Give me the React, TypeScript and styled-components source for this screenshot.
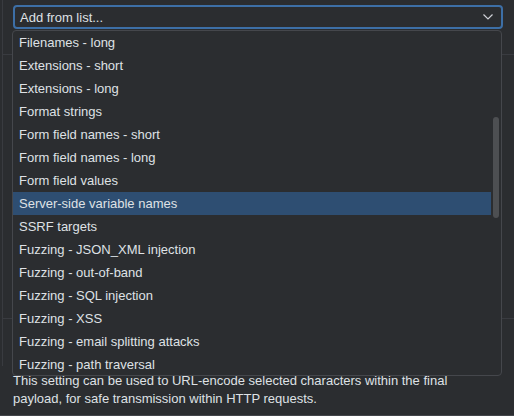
import React from 'react';
import styled, { createGlobalStyle } from 'styled-components';

const GlobalStyle = createGlobalStyle`
	html, body {
		margin: 0;
		padding: 0;
		background: #2b2d30;
	}
	body {
		font-family: 'Liberation Sans', Arial, sans-serif;
		font-size: 13px;
		color: #dfe1e5;
	}
`;

const Page = styled.div`
	position: relative;
	width: 514px;
	height: 416px;
	overflow: hidden;
	background: #2b2d30;
	border-bottom: 1px solid #43454a;
	box-sizing: border-box;
`;

const Frame = styled.div`
	margin-left: 2px;
	height: 366px;
	border-left: 1px solid #393b40;
	display: flex;
	flex-direction: column;
`;

const Section = styled.div<{ $h: number }>`
	height: ${p => p.$h}px;
	flex: 0 0 auto;
	border-bottom: 1px solid #393b40;
	box-sizing: border-box;
	padding-top: 5px;
	padding-left: 10px;
`;

const Combo = styled.div`
	width: 490px;
	height: 24px;
	box-sizing: border-box;
	border: 2px solid #3d6fa6;
	border-radius: 4px;
	display: flex;
	align-items: center;
	justify-content: space-between;
	padding: 0 8px 0 5px;
	color: #dfe1e5;
`;

const Chevron = styled.svg`
	width: 10px;
	height: 6px;
`;

const Description = styled.p`
	margin: 6px 0 0 13px;
	line-height: 18px;
	width: 470px;
`;

const Popup = styled.div`
	position: absolute;
	top: 30px;
	left: 12px;
	width: 490px;
	height: 346px;
	box-sizing: border-box;
	background: #2b2d30;
	border: 1px solid #45474c;
	border-radius: 4px;
	overflow: hidden;
`;

const List = styled.ul`
	list-style: none;
	margin: 0;
	padding: 0 10px 0 0;
`;

const Item = styled.li<{ $selected?: boolean }>`
	height: 23px;
	line-height: 23px;
	padding-left: 6px;
	white-space: nowrap;
	background: ${p => (p.$selected ? '#2e4e72' : 'transparent')};
`;

const Thumb = styled.div`
	position: absolute;
	top: 86px;
	right: 2px;
	width: 6px;
	height: 101px;
	border-radius: 3px;
	background: #4d4f52;
`;

const items = [
	'Filenames - long',
	'Extensions - short',
	'Extensions - long',
	'Format strings',
	'Form field names - short',
	'Form field names - long',
	'Form field values',
	'Server-side variable names',
	'SSRF targets',
	'Fuzzing - JSON_XML injection',
	'Fuzzing - out-of-band',
	'Fuzzing - SQL injection',
	'Fuzzing - XSS',
	'Fuzzing - email splitting attacks',
	'Fuzzing - path traversal',
];

export default function App() {
	return (
		<Page>
			<GlobalStyle />
			<Frame>
				<Section $h={55}>
					<Combo>
						<span>Add from list...</span>
						<Chevron viewBox='0 0 10 6'>
							<path d='M0.5 0.5 L5 5 L9.5 0.5' fill='none' stroke='#ced0d6' strokeWidth='1.2' />
						</Chevron>
					</Combo>
				</Section>
				<Section $h={264} />
			</Frame>
			<Description>
				This setting can be used to URL-encode selected characters within the final payload, for safe
				transmission within HTTP requests.
			</Description>
			<Popup>
				<List>
					{items.map(name => (
						<Item key={name} $selected={name === 'Server-side variable names'}>
							{name}
						</Item>
					))}
				</List>
				<Thumb />
			</Popup>
		</Page>
	);
}
